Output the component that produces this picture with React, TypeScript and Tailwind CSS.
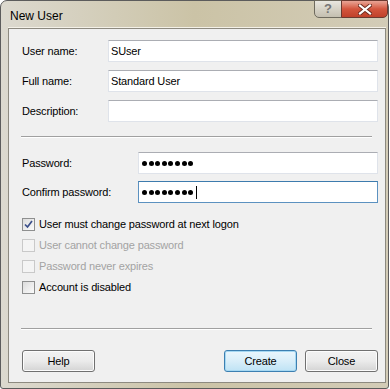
import React from "react";

const font = { fontFamily: '"Liberation Sans", Arial, sans-serif' };

function TextBox({ value, focused }: { value?: string; focused?: boolean }) {
  return (
    <div
      className={
        "flex-1 h-[22px] bg-white border flex items-center pl-[2px] text-[11px] tracking-[-0.15px] text-black " +
        (focused
          ? "border-[#5b91c0] border-t-[#3d7bad]"
          : "border-[#dfe3ea] border-t-[#abadb3]")
      }
    >
      {value}
    </div>
  );
}

function Dots({ caret }: { caret?: boolean }) {
  return (
    <div className="flex items-center gap-[1.6px] pl-[3px]">
      {Array.from({ length: 8 }).map((_, i) => (
        <span key={i} className="w-[5px] h-[5px] rounded-full bg-black" />
      ))}
      {caret && <span className="ml-[1px] w-[1px] h-[13px] bg-black" />}
    </div>
  );
}

function Field({
  label,
  labelW,
  children,
}: {
  label: string;
  labelW: string;
  children: React.ReactNode;
}) {
  return (
    <div className="flex items-center">
      <span className={`${labelW} text-[11px] tracking-[-0.15px] text-black`}>{label}</span>
      {children}
    </div>
  );
}

function Check({
  label,
  checked,
  disabled,
}: {
  label: string;
  checked?: boolean;
  disabled?: boolean;
}) {
  return (
    <div className="flex items-center h-[13px]">
      <span
        className={
          "w-[13px] h-[13px] border flex items-center justify-center " +
          (disabled
            ? "border-[#c9c9c9] bg-[#f4f4f4]"
            : "border-[#8e8f8f] bg-gradient-to-br from-[#dcdcdc] to-[#fbfbfb]")
        }
      >
        {checked && (
          <svg width="9" height="9" viewBox="0 0 9 9">
            <path d="M1 4.5 L3.5 7 L8 1" fill="none" stroke="#3b4f8a" strokeWidth="1.7" />
          </svg>
        )}
      </span>
      <span
        className={
          "ml-[4px] text-[11px] tracking-[-0.15px] " +
          (disabled ? "text-[#a3a3a3]" : "text-black")
        }
      >
        {label}
      </span>
    </div>
  );
}

function Button({ label, primary }: { label: string; primary?: boolean }) {
  return (
    <div
      className={
        "w-[73px] h-[22px] rounded-[3px] border flex items-center justify-center text-[11px] tracking-[-0.15px] text-black " +
        (primary
          ? "border-[#3c7fb1] bg-gradient-to-b from-[#eaf6fd] via-[#d9eef9] to-[#bfe3f5] shadow-[inset_0_0_0_1px_#a6d8f2]"
          : "border-[#707070] bg-gradient-to-b from-[#f2f2f2] via-[#ebebeb] to-[#d4d4d4] shadow-[inset_0_0_0_1px_#fcfcfc]")
      }
    >
      {label}
    </div>
  );
}

function Separator() {
  return (
    <div className="-ml-px mr-[6px] border-t border-[#a0a0a0] border-b-white border-b" />
  );
}

export default function App() {
  return (
    <div className="w-[390px] h-[389px] bg-white" style={font}>
      <div className="w-[389px] h-[389px] rounded-t-[7px] rounded-b-[3px] border border-[#5c5c5c] bg-gradient-to-r from-[#dcd9cf] via-[#cbc3a6] to-[#d3ccb7] flex flex-col">
        {/* title bar */}
        <div className="h-[27px] flex items-start">
          <span className="pl-[9px] pt-[6px] text-[12px] text-black">New User</span>
          <div className="ml-auto flex">
            <div className="w-[28px] h-[18px] -mt-px border border-[#6e6a5e] rounded-bl-[5px] bg-gradient-to-b from-[#e9e7e0] via-[#d6d2c6] to-[#c4bfb0] flex items-center justify-center text-[13px] font-bold text-[#757575]">
              ?
            </div>
            <div className="w-[47px] h-[18px] -mt-px -ml-px border border-[#6b3a30] rounded-br-[5px] bg-gradient-to-b from-[#e8a596] via-[#d3553d] to-[#c0412b] flex items-center justify-center">
              <svg width="14" height="11" viewBox="0 0 14 11">
                <path d="M2 1.5 L12 9.5 M12 1.5 L2 9.5" stroke="#6b2a1e" strokeWidth="4" strokeLinecap="square" />
                <path d="M2 1.5 L12 9.5 M12 1.5 L2 9.5" stroke="#ffffff" strokeWidth="2.2" strokeLinecap="square" />
              </svg>
            </div>
          </div>
        </div>

        {/* client area */}
        <div className="ml-[7px] mr-[2px] flex-1 border border-[#8d8a80] shadow-[0_-1px_0_#f4f1e8] bg-[#f0f0f0] flex flex-col pl-[13px] pr-[7px] pt-[11px]">
          <div className="flex flex-col gap-[8px]">
            <Field label="User name:" labelW="w-[86px]">
              <TextBox value="SUser" />
            </Field>
            <Field label="Full name:" labelW="w-[86px]">
              <TextBox value="Standard User" />
            </Field>
            <Field label="Description:" labelW="w-[86px]">
              <TextBox />
            </Field>
          </div>

          <div className="mt-[14px]">
            <Separator />
          </div>

          <div className="mt-[14px] flex flex-col gap-[7px]">
            <Field label="Password:" labelW="w-[116px]">
              <div className="flex-1 h-[22px] bg-white border border-[#dfe3ea] border-t-[#abadb3] flex items-center">
                <Dots />
              </div>
            </Field>
            <Field label="Confirm password:" labelW="w-[116px]">
              <div className="flex-1 h-[22px] bg-white border border-[#5b91c0] border-t-[#3d7bad] flex items-center">
                <Dots caret />
              </div>
            </Field>
          </div>

          <div className="mt-[15px] flex flex-col gap-[8px]">
            <Check label="User must change password at next logon" checked />
            <Check label="User cannot change password" disabled />
            <Check label="Password never expires" disabled />
            <Check label="Account is disabled" />
          </div>

          <div className="mt-[34px]">
            <Separator />
          </div>

          <div className="mt-[20px] flex items-center">
            <Button label="Help" />
            <div className="ml-auto flex gap-[8px]">
              <Button label="Create" primary />
              <Button label="Close" />
            </div>
          </div>
        </div>
        <div className="h-[5px]" />
      </div>
    </div>
  );
}
